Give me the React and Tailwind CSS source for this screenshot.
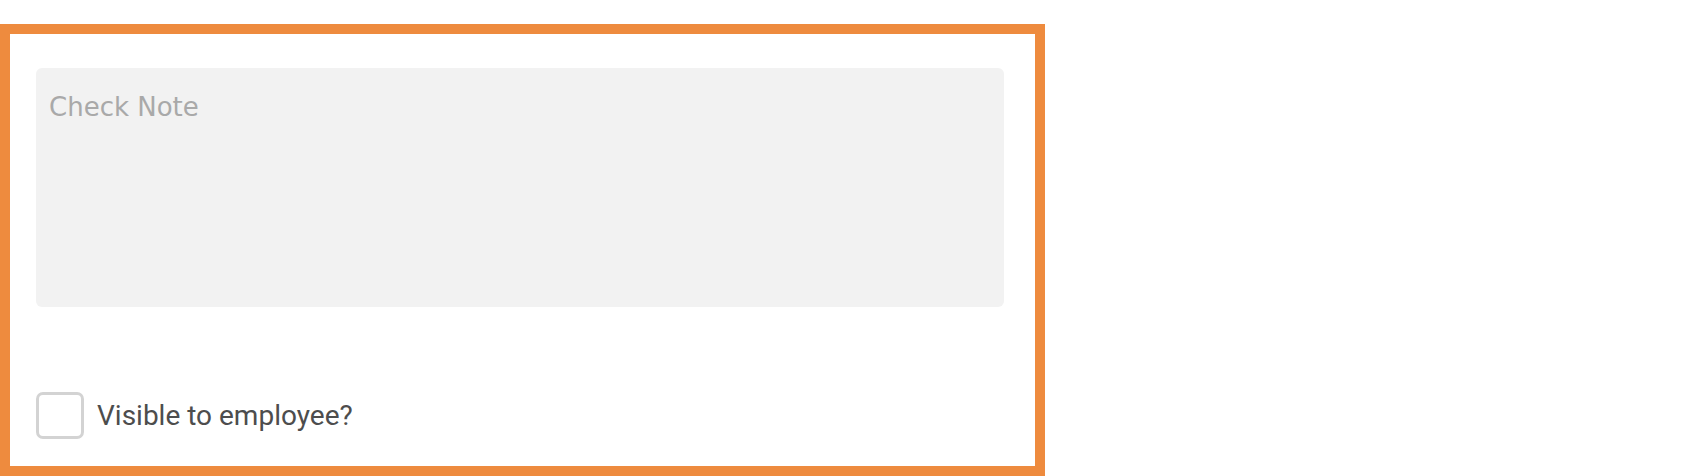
import React, { useState } from 'react';

const App = () => {
  const [note, setNote] = useState('');
  const [visible, setVisible] = useState(false);

  return (
    <div className="min-h-[476px] bg-white pt-[24px]">
      <div className="w-[1045px] border-[10px] border-b-0 border-[#ee8b3e] bg-white pt-[34px] pl-[26px] pb-[27px] relative">
        <textarea
          value={note}
          onChange={(e) => setNote(e.target.value)}
          placeholder="Check Note"
          className="block w-[968px] h-[239px] resize-none rounded-[6px] bg-[#f2f2f2] px-[13px] pt-[21px] text-[26px] leading-[36px] text-[#555] placeholder:text-[#a9a9a9] outline-none"
          style={{ fontFamily: '"Comic Sans MS", "DejaVu Sans", sans-serif' }}
        />

        <label className="mt-[85px] flex items-center gap-[13px] cursor-pointer select-none">
          <input
            type="checkbox"
            checked={visible}
            onChange={(e) => setVisible(e.target.checked)}
            className="peer sr-only"
          />
          <span className="w-[48px] h-[47px] shrink-0 rounded-[7px] border-[3px] border-[#d3d3d3] bg-white" />
          <span className="text-[28px] leading-[32px] text-[#4d4d4d] font-['Roboto',sans-serif]">
            Visible to employee?
          </span>
        </label>
        <div className="absolute left-[-10px] right-[-10px] bottom-[-10px] h-[10px] bg-[#ee8b3e]" />
      </div>
    </div>
  );
};

export default App;
